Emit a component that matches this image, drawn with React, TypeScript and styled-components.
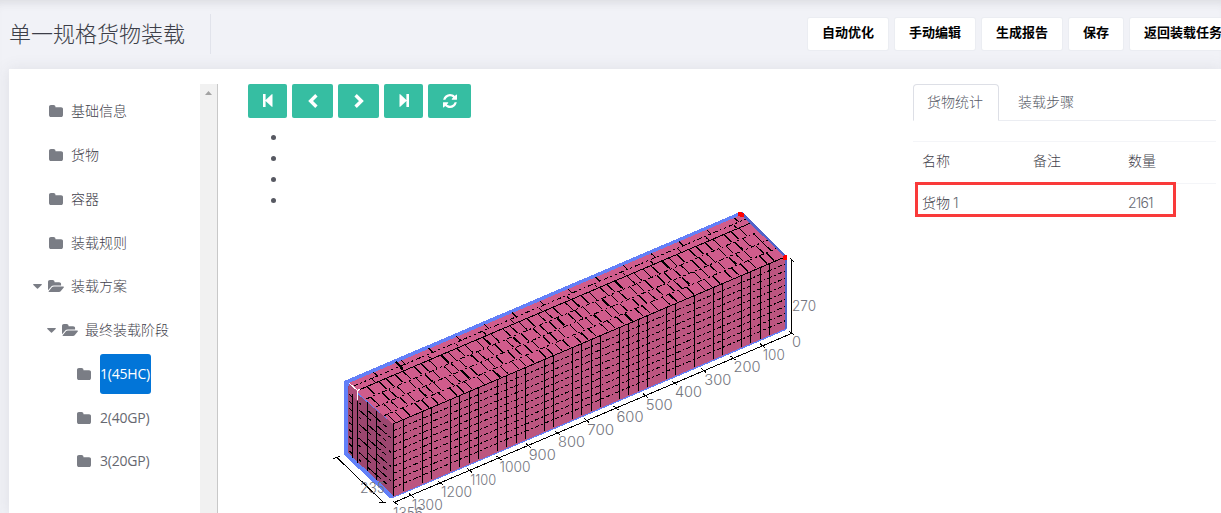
import React from 'react';
import styled, { createGlobalStyle } from 'styled-components';

const CJK = '"Noto Sans CJK SC", sans-serif';

const Global = createGlobalStyle`
  * { box-sizing: border-box; }
  html, body { margin: 0; padding: 0; background: #f1f2f7; }
  body { overflow: hidden; font-family: Inter, ${CJK}; font-size: 14px; color: #575962; font-weight: 300; }
`;

const Page = styled.div`
  width: 1221px; height: 513px; overflow: hidden; display: flex; flex-direction: column;
  background: #f1f2f7; box-shadow: inset 0 9px 9px -6px rgba(69, 65, 78, 0.12);
`;
const Header = styled.header`
  height: 69px; flex: none; display: flex; align-items: flex-start; padding: 14px 0 0 9px;
`;
const Title = styled.h1`
  margin: 0; height: 40px; width: 202px; flex: none; border-right: 1px solid #e1e3eb;
  font: 300 22px/36px ${CJK}; color: #3c3e48; white-space: nowrap;
`;
const Actions = styled.div`
  display: flex; gap: 7px; margin-left: 597px; padding-top: 4px; flex: none;
`;
const ActionButton = styled.button`
  border: 0; padding: 0 14px; height: 32px; background: #fff; border-radius: 2px; color: #000;
  font: 700 13px/28px ${CJK}; white-space: nowrap; box-shadow: 0 0 0 1px #ebedf2; flex: none;
  display: flex; align-items: flex-start;
`;
const Card = styled.main`
  flex: 1; margin-left: 9px; background: #fff; display: flex; align-items: stretch; padding-top: 15px; min-height: 0;
  box-shadow: 0 1px 15px 1px rgba(69, 65, 78, 0.1);
`;
const Sidebar = styled.aside`
  width: 209px; flex: none; display: flex; border-right: 1px solid #c8c8c8;
`;
const Tree = styled.ul`
  list-style: none; margin: 0; padding: 5.4px 0 0; flex: 1; min-width: 0;
`;
const Node = styled.li<{ $indent: number }>`
  display: flex; align-items: center; height: 43.75px; padding-left: ${p => p.$indent}px; color: #7a7d85;
`;
const CaretBox = styled.span`width: 15px; display: flex; flex: none;`;
const IconBox = styled.span<{ $gap: number }>`width: 16px; margin-right: ${p => p.$gap}px; display: flex; justify-content: center; flex: none;`;
const NodeLabel = styled.span<{ $selected?: boolean }>`
  height: 40px; line-height: 40px; border-radius: 3px; white-space: nowrap; font-family: "Open Sans", ${CJK};
  font-weight: 300; font-size: 14px; color: ${p => (p.$selected ? '#fff' : '#3f414b')};
  background: ${p => (p.$selected ? '#0275d8' : 'transparent')};
`;
const Latin = styled.span<{ $selected?: boolean }>`
  font-size: 14px; letter-spacing: -0.2px; font-weight: 400; display: block; width: 51px;
  color: ${p => (p.$selected ? '#fff' : '#666870')};
`;
const ScrollTrack = styled.div`
  width: 17px; background: #f1f1f1; display: flex; justify-content: center; padding-top: 7px;
`;
const Viewer = styled.section`width: 695px; flex: none; padding-left: 30px; display: flex; flex-direction: column;`;
const Toolbar = styled.div`display: flex; gap: 5px; flex: none;`;
const ToolButton = styled.button<{ $w: number }>`
  width: ${p => p.$w}px; height: 34px; border: 0; border-radius: 2px; padding: 0; background: #36bea2; color: #fff;
  display: flex; align-items: center; justify-content: center; padding-bottom: 1px;
`;
const Bullets = styled.ul`margin: 9px 0 0 22px; padding: 0; list-style: none; flex: none;`;
const Bullet = styled.li`
  height: 21px; display: flex; align-items: center;
  &::before { content: ''; width: 5px; height: 5px; margin-left: 1px; border-radius: 50%; background: #575962; }
`;
const Scene = styled.svg`display: block; margin: -1px 0 0 52px; flex: none; font-family: Inter, sans-serif; font-weight: 300;`;

const Stats = styled.section`width: 303px; flex: none;`;
const Tabs = styled.div`display: flex; height: 37px; border-bottom: 1px solid #ebedf2;`;
const Tab = styled.div<{ $active?: boolean }>`
  height: 37px; padding: 0 18px; font: 300 14px/32px ${CJK};
  color: #575a66; border: 1px solid ${p => (p.$active ? '#dddfe6' : 'transparent')}; border-bottom-color: ${p => (p.$active ? '#fff' : 'transparent')};
  border-radius: 4px 4px 0 0; ${p => p.$active && 'width: 86px; padding: 0 13px; background: #fff;'}
`;
const Table = styled.div`margin-top: 20px; position: relative;`;
const Row = styled.div`
  display: grid; grid-template-columns: 111px 95px 1fr; height: 42px; padding-left: 9px; border-top: 1px solid #f4f5f8;
  line-height: 37px; font-family: ${CJK}; font-weight: 300; color: #3f414b;
`;
const Num = styled.span`font-family: Inter, sans-serif; font-weight: 300; letter-spacing: -0.8px; font-size: 14px; color: #686a72; line-height: 38px;`;
const Highlight = styled.div`
  position: absolute; left: 2px; top: 41px; width: 261px; height: 35px; border: 3px solid #f93a3a;
`;

const FolderIcon = () => (
  <svg width="14" height="12" viewBox="0 128 1664 1408" preserveAspectRatio="none" fill="currentColor">
    <path d="M1664 608v704q0 92-66 158t-158 66h-1216q-92 0-158-66t-66-158v-960q0-92 66-158t158-66h320q92 0 158 66t66 158v32h672q92 0 158 66t66 158z" />
  </svg>
);
const FolderOpenIcon = () => (
  <svg width="16" height="12" viewBox="0 128 1880 1408" preserveAspectRatio="none" fill="currentColor">
    <path d="M1879 952q0 31-31 66l-336 396q-43 51-120.5 86.5t-143.5 35.5h-1088q-34 0-60.5-13t-26.5-43q0-31 31-66l336-396q43-51 120.5-86.5t143.5-35.5h1088q34 0 60.5 13t26.5 43zm-343-344v160h-832q-94 0-197 47.5t-164 119.5l-337 396-5 6q0-4-.5-12.5t-.5-12.5v-960q0-92 66-158t158-66h320q92 0 158 66t66 158v32h544q92 0 158 66t66 158z" />
  </svg>
);
const Caret = () => (
  <svg width="9" height="5" viewBox="0 0 9 5" fill="currentColor"><path d="M.6 0h7.8q.8.2.2.9L5 4.6q-.5.5-1 0L.4.9Q-.2.2.6 0z" /></svg>
);
const Step = ({ flip }: { flip?: boolean }) => (
  <svg width="10" height="13" viewBox="0 0 10 13" fill="currentColor">
    <path transform={flip ? 'matrix(-1 0 0 1 10 0)' : undefined} d="M0 0H2.6V6.1L8.8.2Q9.5-.2 9.5.8V12.2Q9.5 13.2 8.8 12.8L2.6 6.9V13H0z" />
  </svg>
);
const Chevron = ({ flip }: { flip?: boolean }) => (
  <svg width="10" height="14" viewBox="0 0 10 14" fill="none" stroke="currentColor" strokeWidth="3.4">
    <path transform={flip ? 'matrix(-1 0 0 1 10 0)' : undefined} d="M8.4 1.2L2.6 7l5.8 5.8" />
  </svg>
);
const Refresh = () => (
  <svg width="14" height="14" viewBox="0 0 1536 1536" fill="currentColor">
    <path d="M1511 928q0 5-1 7-64 268-268 434.5t-478 166.5q-146 0-282.5-55t-243.5-157l-129 129q-19 19-45 19t-45-19-19-45v-448q0-26 19-45t45-19h448q26 0 45 19t19 45-19 45l-137 137q71 66 161 102t187 36q134 0 250-65t186-179q11-17 53-117 8-23 30-23h192q13 0 22.5 9.5t9.5 22.5zm25-800v448q0 26-19 45t-45 19h-448q-26 0-45-19t-19-45 19-45l138-138q-148-137-349-137-134 0-250 65t-186 179q-11 17-53 117-8 23-30 23h-199q-13 0-22.5-9.5t-9.5-22.5v-7q65-268 270-434.5t480-166.5q146 0 284 55.5t245 156.5l130-129q19-19 45-19t45 19 19 45z" />
  </svg>
);

type NodeData = { label: string; indent: number; open?: boolean; selected?: boolean; latin?: boolean };
const nodes: NodeData[] = [
  { label: '基础信息', indent: 39 },
  { label: '货物', indent: 39 },
  { label: '容器', indent: 39 },
  { label: '装载规则', indent: 39 },
  { label: '装载方案', indent: 24, open: true },
  { label: '最终装载阶段', indent: 38, open: true },
  { label: '1(45HC)', indent: 67, selected: true, latin: true },
  { label: '2(40GP)', indent: 67, latin: true },
  { label: '3(20GP)', indent: 67, latin: true },
];

// Vertical seams on the long side of the load.
const seams = [
  403, 422, 431, 450, 459, 469, 478, 497, 506, 516, 525, 544, 553, 572, 581, 591, 600, 619, 628, 638, 647, 666, 675,
  694, 713, 722, 741, 750, 760, 769,
];
// Lanes across the top, from the front edge to the back edge.
const lanes = [0, 0.2, 0.4, 0.6, 0.8, 0.9, 1];

const topPoint = (u: number, v: number): [number, number] => [393 + 392 * u - 44 * v, 424 - 167 * u - 42 * v];

const laneMarks = () => {
  const marks: { u: number; v0: number; v1: number; w: number }[] = [];
  const steps = [7, 8, 12, 7, 9, 8, 11];
  for (let k = 0; k < 4; k++) {
    let x = 3 + ((k * 5) % 9);
    let i = k * 3;
    while (x < 390) {
      marks.push({ u: x / 392, v0: lanes[k] + 0.02, v1: lanes[k + 1] - 0.01, w: i % 5 === 2 ? 1.7 : 1 });
      x += steps[i % 7];
      i++;
    }
  }
  for (let x = 18; x < 388; x += 27.8) {
    marks.push({ u: x / 392, v0: 0.82, v1: 0.88, w: 1 });
    marks.push({ u: (x + 6) / 392, v0: 0.89, v1: 1, w: 1 });
  }
  return marks;
};

const ticks = Array.from({ length: 14 }, (_, i) => ({ label: String(i * 100), x: 791.5 - i * 29.25, y: 333 + i * 12.5 }));

const labelWidth = (label: string) => {
  if (label === '0') return 9;
  if (label === '100') return 22;
  if (label.length === 3) return 27;
  return label === '1100' ? 26 : 31;
};

const LoadScene = () => (
  <Scene width="520" height="303" viewBox="300 210 520 303">
    <g shapeRendering="crispEdges">
      <path d="M344 381L740 212L743 212L787 257V328L786 330L393 498L390 498L344 455z" fill="#6380f8" />
      <path d="M742 212L787 257V328L785 329V258L739 215z" fill="#5164cb" />
      <polygon points="348,386 393,424 393,495 348,453" fill="#9c466f" />
      <polygon points="393,424 785,257 785,329 393,497" fill="#bc5580" />
      <polygon points="349,383 741,215 785,257 393,424 357,392 349,388" fill="#d05c8c" />
      <polygon points="349,384 357,391 357,400 349,394" fill="#ad4f7a" />
      <g stroke="#000" fill="none">
        <path d="M393.5 424V496M393 424L785 257" />
        {seams.map(x => {
          const y = 424 - (x - 393) * 0.426;
          return <line key={x} x1={x + 0.5} x2={x + 0.5} y1={y} y2={y + 71} />;
        })}
        {Array.from({ length: 9 }, (_, i) => (
          <line key={i} x1="393" y1={431 + i * 7.1} x2="785" y2={264 + i * 7.1} strokeDasharray="4.6 2.2 2 2.2" />
        ))}
        <path d="M376.5 411V480M367.5 402V471M357.5 401V463M352.5 394V458" />
        {Array.from({ length: 9 }, (_, i) => (
          <line key={i} x1="349" y1={394 + i * 7.1} x2="391" y2={431 + i * 7.1} strokeDasharray={i % 2 ? '4 9 16 7 14 3' : '5 8 3 9 17 3'} />
        ))}
        {lanes.slice(1, -1).map(v => {
          const [x1, y1] = topPoint(0, v);
          const [x2, y2] = topPoint(1, v);
          return <line key={v} x1={x1} y1={y1} x2={x2} y2={y2} strokeDasharray={v === 0.8 ? undefined : '5 2 2 3 2 3'} />;
        })}
        {laneMarks().map((m, i) => {
          const [x1, y1] = topPoint(m.u, m.v0);
          const [x2, y2] = topPoint(m.u, m.v1);
          return <line key={i} x1={x1} y1={y1} x2={x2} y2={y2} strokeWidth={m.w} />;
        })}
        <path d="M396 362L403 369" strokeWidth="2" />
        <path d="M394 502.5L791.5 333.5M791.5 259V333M337 457.5L383 502M333 458.5L340 456.5M379 502.5H386M393 501L398 505M790 258L794 262" />
        {ticks.map(t => <line key={t.label} x1={t.x - 2.5} y1={t.y - 2} x2={t.x + 2.5} y2={t.y + 2} />)}
      </g>
      <path d="M349 383L357.5 390.5V400M357 391L360 389" stroke="#fff" fill="none" />
      <path d="M738 212h4v1h2v4h-4v-1h-2zM784 255h3v5h-4v-4h1z" fill="#f00" />
    </g>
    <g fill="#73757e" fontSize="14">
      {ticks.map(t => (
        <text key={t.label} x={t.x + 0.5} y={t.y + 14.2} textLength={labelWidth(t.label)} lengthAdjust="spacingAndGlyphs">{t.label}</text>
      ))}
      <text x="393" y="517.5" textLength="30" lengthAdjust="spacingAndGlyphs">1356</text>
      <text x="360" y="493" textLength="25" lengthAdjust="spacingAndGlyphs">235</text>
      <text x="792" y="311" textLength="24" lengthAdjust="spacingAndGlyphs">270</text>
    </g>
  </Scene>
);

export default function App() {
  return (
    <Page>
      <Global />
      <Header>
        <Title>单一规格货物装载</Title>
        <Actions>
          {['自动优化', '手动编辑', '生成报告', '保存', '返回装载任务'].map(a => <ActionButton key={a}>{a}</ActionButton>)}
        </Actions>
      </Header>
      <Card>
        <Sidebar>
          <Tree>
            {nodes.map(n => (
              <Node key={n.label} $indent={n.indent}>
                {n.open && <CaretBox><Caret /></CaretBox>}
                <IconBox $gap={n.latin ? 8 : 7}>{n.open ? <FolderOpenIcon /> : <FolderIcon />}</IconBox>
                <NodeLabel $selected={n.selected}>
                  {n.latin ? <Latin $selected={n.selected}>{n.label}</Latin> : n.label}
                </NodeLabel>
              </Node>
            ))}
          </Tree>
          <ScrollTrack>
            <svg width="7" height="4" viewBox="0 0 7 4" fill="#a3a3a3"><path d="M3.5 0L7 4H0z" /></svg>
          </ScrollTrack>
        </Sidebar>
        <Viewer>
          <Toolbar>
            <ToolButton $w={39}><Step /></ToolButton>
            <ToolButton $w={41}><Chevron /></ToolButton>
            <ToolButton $w={41}><Chevron flip /></ToolButton>
            <ToolButton $w={39}><Step flip /></ToolButton>
            <ToolButton $w={43}><Refresh /></ToolButton>
          </Toolbar>
          <Bullets><Bullet /><Bullet /><Bullet /><Bullet /></Bullets>
          <LoadScene />
        </Viewer>
        <Stats>
          <Tabs>
            <Tab $active>货物统计</Tab>
            <Tab>装载步骤</Tab>
          </Tabs>
          <Table>
            <Row><span>名称</span><span>备注</span><span>数量</span></Row>
            <Row><span>货物 <Num>1</Num></span><span /><Num>2161</Num></Row>
            <Highlight />
          </Table>
        </Stats>
      </Card>
    </Page>
  );
}
